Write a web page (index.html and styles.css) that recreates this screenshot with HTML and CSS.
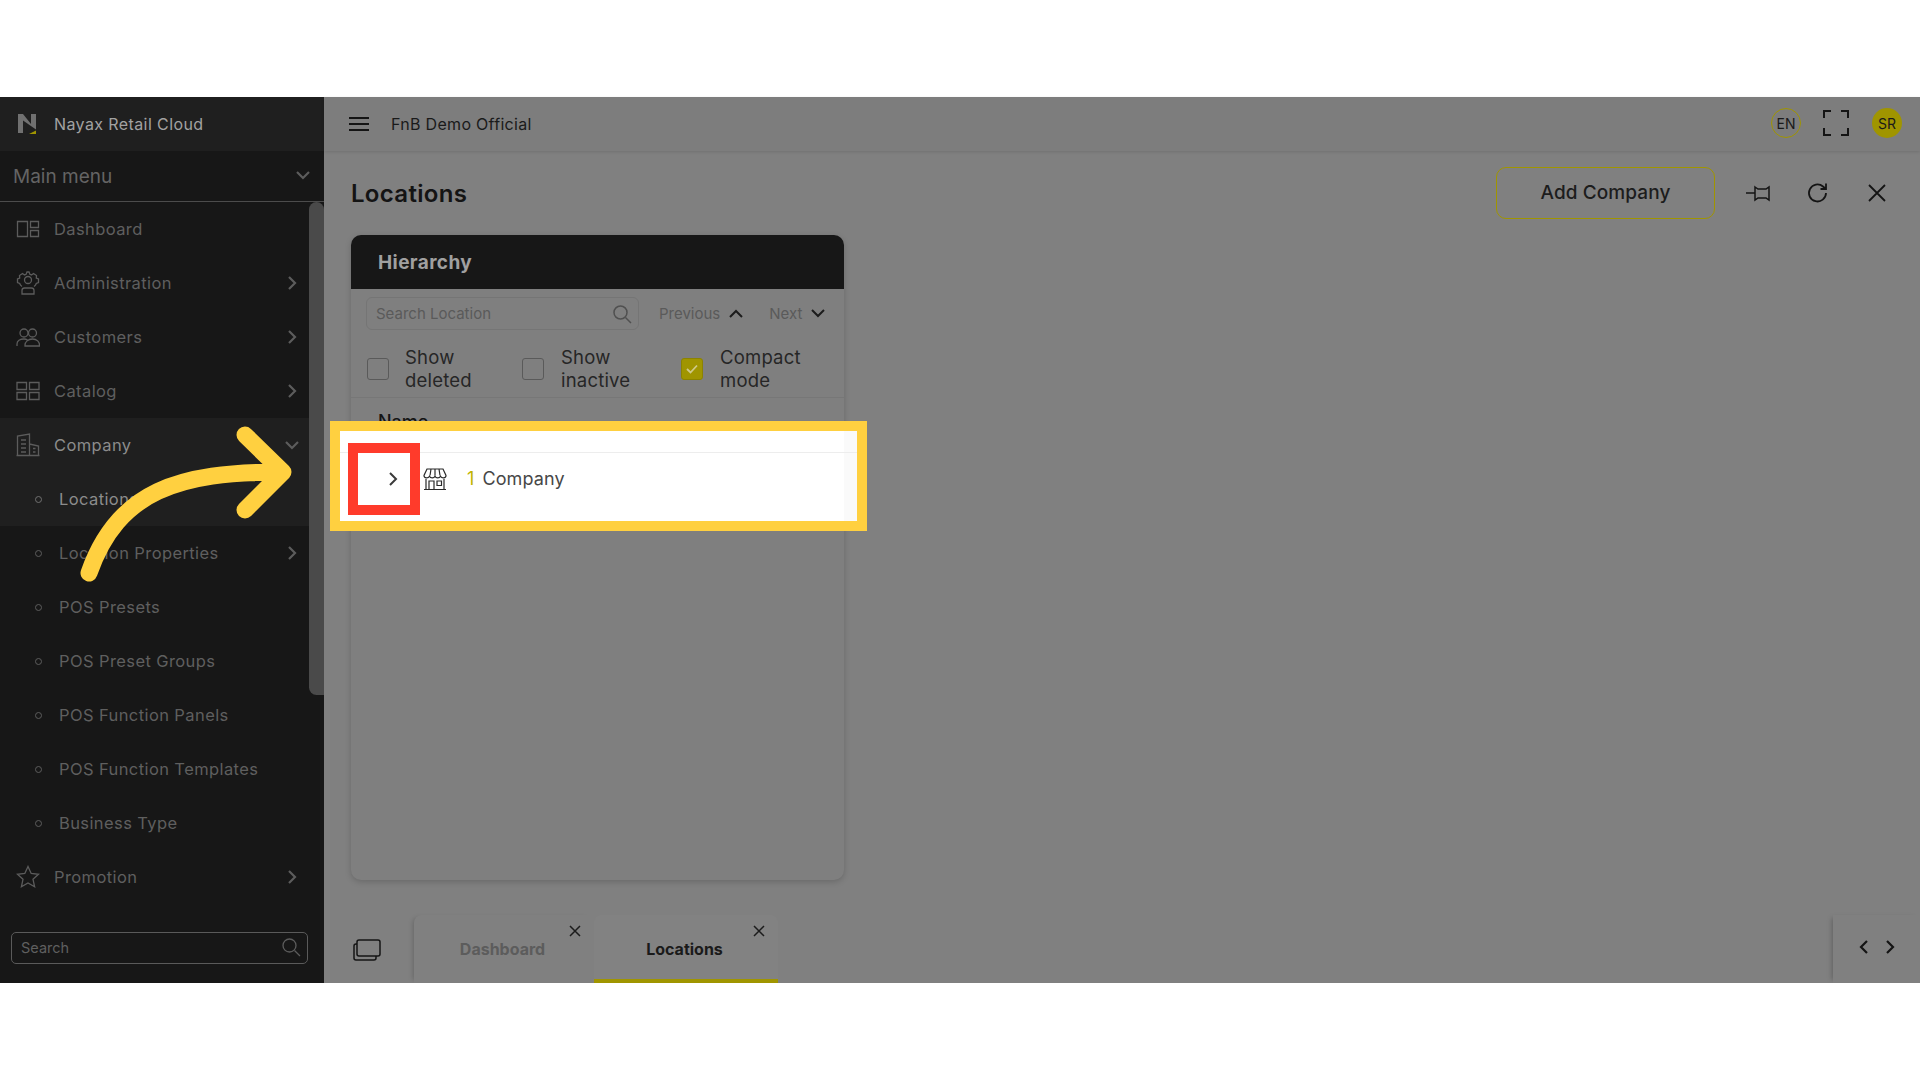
FILE: index.html
```html
<!DOCTYPE html>
<html lang="en">
<head>
<meta charset="UTF-8">
<title>Locations</title>
<link rel="stylesheet" href="styles.css">
</head>
<body>

<div class="screen">

  <!-- Sidebar -->
  <aside class="side">
    <div class="brand">
      <svg class="logo" width="20" height="22" viewBox="0 0 20 22"><path d="M1 20V1h5l8 10V1h5v15.500L6 7.500V20z" fill="#707070"/><path d="M12 21l7-3.500V21z" fill="#a09500"/></svg>
      <span>Nayax Retail Cloud</span>
    </div>
    <div class="mainmenu">
      <span>Main menu</span>
      <svg width="16" height="10" viewBox="0 0 16 10"><path d="M2 1l6 6 6-6" class="ln2"/></svg>
    </div>
    <div class="navwrap">
      <nav class="nav">
        <a class="item">
          <svg class="ic" viewBox="0 0 24 24"><path d="M1.500 4.500h10v15h-10zM14.500 4.500h8v6h-8zM14.500 13.500h8v6h-8z" class="ln"/></svg>
          <span>Dashboard</span>
        </a>
        <a class="item">
          <svg class="ic" viewBox="0 0 24 24"><circle cx="12" cy="9" r="3.500" class="ln"/><path d="M6 15.500C4.500 14.500 4 13.500 3.700 12.500L1.500 11.500V8L3.700 7 3.500 4.500 6.500 2.500 8.500 4C9 3.700 9.500 3.500 10 3.400L11 1h2l1 2.400c.5.100 1 .3 1.500.6L17.500 2.500 20.500 4.500 20.300 7 22.500 8v3.500L20.300 12.500C20 13.500 19.500 14.500 18 15.500M6 23v-3.500c0-1.500 1-2.500 2.500-2.500h7c1.500 0 2.500 1 2.500 2.500V23z" class="ln"/></svg>
          <span>Administration</span>
          <svg class="chev" viewBox="0 0 10 16"><path d="M2 2l6 6-6 6" class="ln2"/></svg>
        </a>
        <a class="item">
          <svg class="ic" viewBox="0 0 24 24"><circle cx="8" cy="8" r="4" class="ln"/><circle cx="16.500" cy="8" r="4" class="ln"/><path d="M1 21v-2c0-3 3-5 7-5 1.500 0 2.500.3 3.500 1M9 21v-1c0-3 3-6 7.500-6s7 3 7 6v1z" class="ln"/></svg>
          <span>Customers</span>
          <svg class="chev" viewBox="0 0 10 16"><path d="M2 2l6 6-6 6" class="ln2"/></svg>
        </a>
        <a class="item">
          <svg class="ic" viewBox="0 0 24 24"><path d="M1 3.500h9.500v7H1zM13.500 3.500H23v7h-9.500zM1 13.500h9.500v7H1zM13.500 13.500H23v7h-9.500z" class="ln"/></svg>
          <span>Catalog</span>
          <svg class="chev" viewBox="0 0 10 16"><path d="M2 2l6 6-6 6" class="ln2"/></svg>
        </a>
        <a class="item open">
          <svg class="ic" viewBox="0 0 24 24"><path d="M1.500 22.500V3l12-2v21.500M13.500 11l9 2v9.500M.5 22.500h23M5 7h5M5 11h5M5 15h5M5 19h5M17 15.500h2.500M17 19h2.500" class="ln"/></svg>
          <span>Company</span>
          <svg class="chev down" viewBox="0 0 16 10"><path d="M2 2l6 6 6-6" class="ln2"/></svg>
        </a>
        <a class="sub current"><i></i><span>Locations</span></a>
        <a class="sub"><i></i><span>Location Properties</span>
          <svg class="chev" viewBox="0 0 10 16"><path d="M2 2l6 6-6 6" class="ln2"/></svg>
        </a>
        <a class="sub"><i></i><span>POS Presets</span></a>
        <a class="sub"><i></i><span>POS Preset Groups</span></a>
        <a class="sub"><i></i><span>POS Function Panels</span></a>
        <a class="sub"><i></i><span>POS Function Templates</span></a>
        <a class="sub"><i></i><span>Business Type</span></a>
        <a class="item">
          <svg class="ic" viewBox="0 0 24 24"><path d="M12 1.500l3.200 7 7.300.8-5.500 5 1.600 7.500-6.600-3.800-6.600 3.800 1.600-7.500-5.500-5 7.300-.8z" class="ln"/></svg>
          <span>Promotion</span>
          <svg class="chev" viewBox="0 0 10 16"><path d="M2 2l6 6-6 6" class="ln2"/></svg>
        </a>
      </nav>
      <div class="track"><div class="thumb"></div></div>
    </div>
    <div class="sidesearch">
      <span>Search</span>
      <svg width="20" height="20" viewBox="0 0 20 20"><circle cx="8.500" cy="8.500" r="6.500" class="ln"/><path d="M13.500 13.500L19 19" class="ln"/></svg>
    </div>
  </aside>

  <!-- Main -->
  <main class="main">
    <header class="top">
      <svg class="burger" width="20" height="16" viewBox="0 0 20 16"><path d="M0 2h20M0 8h20M0 14h20"/></svg>
      <span class="org">FnB Demo Official</span>
      <span class="grow"></span>
      <span class="lang">EN</span>
      <svg class="full" width="26" height="26" viewBox="0 0 26 26"><path d="M1 8V1h7M18 1h7v7M25 18v7h-7M8 25H1v-7"/></svg>
      <span class="user">SR</span>
    </header>

    <section class="content">
      <div class="titlebar">
        <h1>Locations</h1>
        <span class="grow"></span>
        <button class="addbtn">Add Company</button>
        <svg class="tool pin" width="26" height="20" viewBox="0 0 26 20"><path d="M1 10h9M10 4l3 2h8l3-2v13l-3-2h-8l-3 2z"/></svg>
        <svg class="tool" width="22" height="22" viewBox="0 0 22 22"><path d="M19 11a8.500 8.500 0 1 1-3-6.500L19 7M19 1.500V7h-5.500"/></svg>
        <svg class="tool last" width="18" height="18" viewBox="0 0 18 18"><path d="M1 1l16 16M17 1L1 17"/></svg>
      </div>

      <div class="card">
        <div class="cardhead">Hierarchy</div>
        <div class="tools">
          <div class="locsearch">
            <span>Search Location</span>
            <svg width="20" height="20" viewBox="0 0 20 20"><circle cx="8.500" cy="8.500" r="6.500"/><path d="M13.500 13.500L19 19"/></svg>
          </div>
          <span class="step">Previous <svg width="14" height="9" viewBox="0 0 14 9"><path d="M1 8l6-6 6 6"/></svg></span>
          <span class="step">Next <svg width="14" height="9" viewBox="0 0 14 9"><path d="M1 1l6 6 6-6"/></svg></span>
        </div>
        <div class="checks">
          <label class="check"><i class="box"></i><span>Show<br>deleted</span></label>
          <label class="check mid"><i class="box"></i><span>Show<br>inactive</span></label>
          <label class="check"><i class="box on"><svg width="12" height="10" viewBox="0 0 12 10"><path d="M1 5l3.500 3.500L11 1.500"/></svg></i><span>Compact<br>mode</span></label>
        </div>
        <div class="colname">Name</div>
      </div>
    </section>

    <footer class="tabs">
      <svg class="stack" width="28" height="22" viewBox="0 0 28 22"><path d="M6 1h19a2 2 0 0 1 2 2v12a2 2 0 0 1-2 2H6a2 2 0 0 1-2-2V3a2 2 0 0 1 2-2zM4 5H3a2 2 0 0 0-2 2v12a2 2 0 0 0 2 2h18a2 2 0 0 0 2-2v-2"/></svg>
      <div class="tab">Dashboard<svg width="12" height="12" viewBox="0 0 12 12"><path d="M1 1l10 10M11 1L1 11"/></svg></div>
      <div class="tab active">Locations<svg width="12" height="12" viewBox="0 0 12 12"><path d="M1 1l10 10M11 1L1 11"/></svg></div>
      <span class="grow"></span>
      <div class="pager">
        <svg width="10" height="16" viewBox="0 0 10 16"><path d="M8 2L2 8l6 6"/></svg>
        <svg width="10" height="16" viewBox="0 0 10 16"><path d="M2 2l6 6-6 6"/></svg>
      </div>
    </footer>
  </main>

  <!-- callout over the page -->
  <div class="spot">
    <div class="spotrow">
      <svg class="rowchev" width="10" height="16" viewBox="0 0 10 16"><path d="M2 2l6 6-6 6"/></svg>
      <svg class="shop" width="24" height="24" viewBox="0 0 24 24"><path d="M4 2h16l3 6.500c0 3-4.200 3-5.500.8-1 2.200-4.500 2.200-5.500 0-1 2.200-4.500 2.200-5.500 0C5.200 11.500 1 11.500 1 8.500zM3 12v10.500h18V12M1 22.500h22M6 22.500V14h5v8.500M14 14h4.500v4.500H14zM8 2L7 8.500M12 2v6.500M16 2l1 6.500"/></svg>
      <span class="num">1</span>
      <span>Company</span>
    </div>
  </div>
  <div class="redbox"></div>
  <svg class="arrow" width="230" height="160" viewBox="0 0 230 160"><path d="M9 148C38 65 100 47 200 47M165 10l38 37-38 38"/></svg>
</div>

</body>
</html>
```

FILE: styles.css
```css
*{box-sizing:border-box}
body{margin:0;background:#fff;font-family:'Inter','Roboto',sans-serif;color:#141414;overflow:hidden}
.grow{flex:1}
svg{display:block;flex:none}
.ln{fill:none;stroke:#5c5c5c;stroke-width:1.3}
.ln2{fill:none;stroke:#5c5c5c;stroke-width:2.2}

.screen{position:relative;display:flex;margin-top:97px;height:886px;background:#808080}

/* sidebar */
.side{width:324px;flex:none;display:flex;flex-direction:column;background:#171717;color:#5f5f5f}
.brand{height:54px;display:flex;align-items:center;gap:17px;padding-left:17px;background:#1f1f1f;color:#a2a2a2;font-size:16px;letter-spacing:.4px}
.mainmenu{height:51px;display:flex;align-items:center;justify-content:space-between;padding:0 13px;border-bottom:1px solid #4c4c4c;font-size:19px;color:#646464}
.navwrap{flex:1;display:flex;min-height:0}
.nav{flex:1;display:flex;flex-direction:column}
.item,.sub{height:54px;flex:none;display:flex;align-items:center;font-size:16.500px;letter-spacing:.4px;position:relative}
.item{padding-left:16px;gap:14px}
.ic{width:24px;height:24px}
.chev{position:absolute;left:287px;top:19px;width:10px;height:16px}
.chev.down{left:284px;top:22px;width:16px;height:10px}
.open,.current{background:#1f1f1f;color:#8c8c8c}
.sub{padding-left:35px;gap:17px}
.sub i{width:7px;height:7px;border:1.500px solid #5c5c5c;border-radius:50%;flex:none}
.current i{border-color:#707070}
.track{width:15px;flex:none}
.thumb{height:493px;background:#4a4a4a;border-radius:8px 8px 0 8px}
.sidesearch{height:32px;margin:0 16px 19px 11px;padding:0 6px 2px 9px;border:1px solid #5a5a5a;border-radius:5px;display:flex;align-items:center;justify-content:space-between;font-size:14.500px}

/* top bar */
.main{flex:1;min-width:0;display:flex;flex-direction:column}
.top{height:54px;flex:none;display:flex;align-items:center;padding:0 18px 2px 25px;background:#7d7d7d;box-shadow:0 1px 3px rgba(0,0,0,.12);font-size:16px;letter-spacing:.3px;color:#1a1a1a}
.burger path,.full path{fill:none;stroke:#141414;stroke-width:2}
.burger{margin-top:2px}
.org{margin-left:22px;margin-top:2px}
.lang,.user{width:30px;height:30px;border-radius:50%;display:flex;align-items:center;justify-content:center;font-size:14px;letter-spacing:0}
.lang{border:1px solid #a09500}
.full{margin:0 23px 0 22px}
.user{background:#a09500}

/* content */
.content{flex:1;padding:16px 0 0 27px;min-height:0}
.titlebar{height:52px;display:flex;align-items:center;padding-right:34px}
.titlebar h1{margin:0;font-size:24px;letter-spacing:.3px;font-weight:600;color:#141414}
.addbtn{width:219px;height:52px;padding:0 0 2px;background:none;border:1px solid #a09500;border-radius:10px;font:500 19px 'Inter','Roboto',sans-serif;letter-spacing:.1px;color:#1c1c1c;margin-right:30px}
.tool{fill:none;stroke:#141414;stroke-width:1.800}
.tool+.tool{margin-left:36px}
.tool.last{margin-left:39px}
.pin{stroke-width:1.500}
.card{width:493px;height:645px;margin-top:16px;border-radius:10px;background:#7f7f7f;box-shadow:0 2px 6px rgba(0,0,0,.18);overflow:hidden}
.cardhead{height:54px;background:#171717;color:#a0a0a0;display:flex;align-items:center;padding-left:27px;font-size:19px;letter-spacing:.4px;font-weight:700}
.tools{display:flex;align-items:center;height:33px;margin-top:9px;padding:0 0 2px 15px;color:#5a5a5a;font-size:15px}
.locsearch{width:273px;flex:none;height:33px;border:1px solid #757575;border-radius:6px;display:flex;align-items:center;justify-content:space-between;padding:0 6px 0 9px;margin-right:20px}
.locsearch svg,.step svg{fill:none;stroke:#505050;stroke-width:1.500}
.step{display:flex;align-items:center;gap:9px;margin-right:26px}
.step svg{stroke:#1c1c1c;stroke-width:2}
.checks{display:flex;height:67px;padding:10px 0 0 16px;border-bottom:1px solid #777;font-size:18.500px;letter-spacing:.2px;line-height:23px;color:#262626}
.check{display:flex;align-items:center;gap:16px;width:155px}
.check.mid{width:159px}
.check.mid span{margin-left:1px}
.check:last-child span{margin-left:1px}
.box{width:22px;height:22px;flex:none;border:1px solid #5a5a5a;border-radius:3px;display:flex;align-items:center;justify-content:center}
.box.on{background:#a09500;border-color:#8c8300}
.box svg{fill:none;stroke:#cfc98a;stroke-width:1.800}
.colname{padding:13px 0 0 27px;font-size:18px;font-weight:500}

/* bottom tabs */
.tabs{height:68px;flex:none;display:flex;align-items:stretch;position:relative}
.stack{fill:none;stroke:#141414;stroke-width:1.500;margin:24px 33px 0 29px}
.tab{width:180px;position:relative;display:flex;align-items:center;justify-content:center;padding-right:3px;font-size:16px;font-weight:700;color:#5c5c5c;box-shadow:-4px 0 5px -3px rgba(0,0,0,.2);border-radius:8px 8px 0 0}
.tab svg{position:absolute;right:13px;top:10px;fill:none;stroke:#1c1c1c;stroke-width:1.500}
.tab.active{width:184px;background:#828282;color:#1a1a1a;box-shadow:inset 0 -4px 0 #a09500}
.pager{width:87px;display:flex;gap:16px;align-items:center;padding:0 0 4px 26px;box-shadow:-4px 0 5px -3px rgba(0,0,0,.25)}
.pager svg{fill:none;stroke:#141414;stroke-width:2.200}

/* callout */
.spot{position:absolute;left:330px;top:324px;width:537px;height:110px;border:10px solid #ffd040;background:linear-gradient(90deg,#fff 504px,#fafafa 504px);padding-top:21px}
.spotrow{height:69px;border-top:1px solid #ededed;display:flex;align-items:center;padding:0 0 17px 48px;font-size:18px;letter-spacing:.1px;color:#474747}
.rowchev{fill:none;stroke:#3a3a3a;stroke-width:2}
.shop{fill:none;stroke:#2a2a2a;stroke-width:1.200;margin:0 0 0 25px}
.num{margin:0 8px 0 20px;color:#c0b400}
.redbox{position:absolute;left:348px;top:346px;width:72px;height:72px;border:10px solid #ff3b2b}
.arrow{position:absolute;left:80px;top:328px;fill:none;stroke:#ffd040;stroke-width:17;stroke-linecap:round;stroke-linejoin:round}
```
